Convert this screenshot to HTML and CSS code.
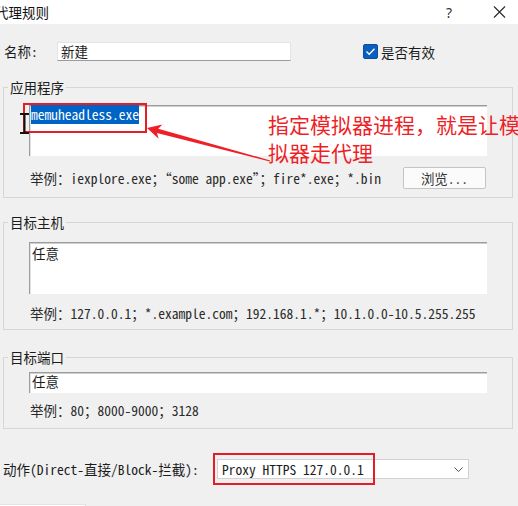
FILE: index.html
```html
<!DOCTYPE html>
<html lang="zh-CN">
<head>
<meta charset="utf-8">
<title>代理规则</title>
<link rel="stylesheet" href="styles.css">
</head>
<body>
<div class="window">
  <div class="titlebar">
    <span class="title">代理规则</span>
    <span class="help">?</span>
    <svg class="close" width="13" height="12" viewBox="0 0 13 12"><path d="M1 0.5 L12 11.5 M12 0.5 L1 11.5" stroke="#2a2a2a" stroke-width="1.1" fill="none"/></svg>
  </div>

  <div class="content">
    <div class="name-row">
      <span class="name-label">名称:</span>
      <div class="name-input">新建</div>
      <div class="check">
        <span class="box"><svg width="15" height="15" viewBox="0 0 15 15"><polyline points="3.5,7.5 6.2,10.2 11.5,4.8" fill="none" stroke="#fff" stroke-width="1.4"/></svg></span>
        <span>是否有效</span>
      </div>
    </div>

    <fieldset class="group g1">
      <legend>应用程序</legend>
      <div class="inner">
        <div class="ta ta1"><span class="sel">memuheadless.exe</span></div>
        <div class="example-row">
          <span class="example">举例：iexplore.exe；“some app.exe”；fire*.exe；*.bin</span>
          <div class="btn">浏览...</div>
        </div>
      </div>
    </fieldset>

    <fieldset class="group g2">
      <legend>目标主机</legend>
      <div class="inner">
        <div class="ta ta2">任意</div>
        <div class="example ex2">举例：127.0.0.1；*.example.com；192.168.1.*；10.1.0.0-10.5.255.255</div>
      </div>
    </fieldset>

    <fieldset class="group g3">
      <legend>目标端口</legend>
      <div class="inner">
        <div class="ta ta3">任意</div>
        <div class="example ex3">举例：80；8000-9000；3128</div>
      </div>
    </fieldset>

    <div class="action-row">
      <span class="action-label">动作(Direct-直接/Block-拦截):</span>
      <div class="select">
        <span>Proxy HTTPS 127.0.0.1</span>
        <svg class="chev" width="9" height="5" viewBox="0 0 9 5"><polyline points="0.5,0.5 4.5,4.5 8.5,0.5" fill="none" stroke="#555" stroke-width="1"/></svg>
      </div>
    </div>

    <div class="footer-btn"></div>
  </div>

  <!-- annotations drawn over the dialog -->
  <div class="mark mark1"></div>
  <div class="mark mark2"></div>
  <svg class="ibeam" width="12" height="23" viewBox="0 0 12 23"><path d="M1 2 H10 M5.5 2 V21 M1 21 H10" stroke="#111" stroke-width="2" fill="none"/></svg>
  <svg class="arrow" width="518" height="506" viewBox="0 0 518 506"><polygon points="147,128 158.6,138.8 157,132.9 269.8,161.6 270.2,160.4 158.2,128.7 162.4,124.4" fill="#ee1f27"/></svg>
  <div class="note">指定模拟器进程，就是让模<br>拟器走代理</div>
</div>
</body>
</html>
```

FILE: styles.css
```css
html, body {
  margin: 0;
  padding: 0;
}
body {
  background: #f0f0f0;
  font-family: "Noto Sans Mono CJK SC", "Noto Sans CJK SC", monospace;
  font-size: 13.5px;
  color: #1c1c1c;
  width: 518px;
  height: 506px;
  overflow: hidden;
}
.window {
  position: relative;
  height: 506px;
  overflow: hidden;
}
.titlebar {
  height: 24px;
  background: #fff;
  display: flex;
  align-items: center;
}
.title {
  flex: 1;
  margin-left: -5px;
  font-family: "Noto Sans CJK SC", sans-serif;
  font-size: 13.5px;
  line-height: 24px;
  color: #111;
}
.help {
  font-family: "Noto Sans", sans-serif;
  font-size: 14px;
  color: #333;
  margin-right: 41px;
}
.close {
  margin-right: 12px;
}
.content {
  padding-top: 18px;
}
.name-row {
  display: flex;
  align-items: center;
  height: 19px;
  padding-left: 4px;
}
.name-label {
  width: 53px;
  line-height: 19px;
}
.name-input {
  box-sizing: border-box;
  width: 234px;
  height: 19px;
  background: #fff;
  border: 1px solid #e4e4e4;
  border-bottom-color: #9a9a9a;
  padding-left: 3px;
  line-height: 17px;
}
.check {
  display: flex;
  align-items: center;
  margin-left: 72px;
}
.box {
  box-sizing: border-box;
  width: 15px;
  height: 15px;
  background: #0b5fbd;
  border: 1px solid #094f9e;
  border-radius: 2px;
  margin-right: 3px;
  display: flex;
}
.box svg {
  margin: -1px;
}
.group {
  margin: 0 5px 0 3px;
  padding: 0;
  border: 1px solid #d6d6d6;
  min-width: 0;
}
.group legend {
  margin-left: 4px;
  padding: 0 2px;
  line-height: 16px;
  color: #1c1c1c;
}
.g1 { margin-top: 18px; }
.g2 { margin-top: 16px; }
.g3 { margin-top: 19px; }
.inner {
  padding-left: 25px;
}
.g1 .inner { padding-top: 10px; padding-bottom: 8px; }
.g2 .inner { padding-top: 12px; padding-bottom: 8px; }
.g3 .inner { padding-top: 7px; padding-bottom: 10px; }
.ta {
  box-sizing: border-box;
  width: 458px;
  background: #fff;
  border-top: 1px solid #9c9c9c;
  border-left: 1px solid #9c9c9c;
  box-shadow: inset 0 1px #cfcfcf, inset 1px 0 #e2e2e2;
  line-height: 17px;
  white-space: nowrap;
}
.ta1 {
  height: 51px;
  padding-left: 1px;
}
.ta2 {
  height: 52px;
  padding: 2px 0 0 2px;
}
.ta3 {
  height: 21px;
  padding: 0 0 0 2px;
  line-height: 16px;
}
.sel {
  background: #0063c6;
  color: #fff;
}
.example {
  color: #2a2a2a;
  line-height: 16px;
  padding-left: 1px;
  white-space: nowrap;
}
.example-row {
  display: flex;
  align-items: center;
  width: 458px;
  height: 22px;
  margin-top: 11px;
}
.btn {
  box-sizing: border-box;
  margin-left: auto;
  margin-right: 1px;
  width: 83px;
  height: 22px;
  border: 1px solid #c4c4c4;
  border-radius: 2px;
  background: #fbfbfb;
  display: flex;
  align-items: center;
  justify-content: center;
  color: #333;
}
.ex2 { margin-top: 11px; }
.ex3 { margin-top: 9px; }
.action-row {
  display: flex;
  align-items: center;
  margin-top: 30px;
  padding-left: 3px;
  height: 20px;
}
.action-label {
  width: 214px;
  line-height: 20px;
}
.select {
  box-sizing: border-box;
  width: 252px;
  height: 20px;
  background: #fff;
  border: 1px solid #d2d2d2;
  display: flex;
  align-items: center;
  padding-left: 4px;
  line-height: 18px;
}
.chev {
  margin-left: auto;
  margin-right: 5px;
}
.footer-btn {
  margin-top: 25px;
  width: 85px;
  height: 20px;
  background: #fff;
  border: 1px solid #e2e2e2;
  border-left: 0;
}
.mark {
  position: absolute;
  box-sizing: border-box;
  border: 2px solid #e61d25;
}
.mark1 {
  left: 23px;
  top: 103px;
  width: 124px;
  height: 30px;
}
.mark2 {
  left: 213px;
  top: 453px;
  width: 162px;
  height: 32px;
}
.ibeam {
  position: absolute;
  left: 19px;
  top: 112px;
}
.arrow {
  position: absolute;
  left: 0;
  top: 0;
  pointer-events: none;
}
.note {
  position: absolute;
  left: 268px;
  top: 111px;
  font-family: "Noto Sans CJK SC", sans-serif;
  font-size: 21px;
  line-height: 27.5px;
  color: #ee1f27;
  white-space: nowrap;
}
```
